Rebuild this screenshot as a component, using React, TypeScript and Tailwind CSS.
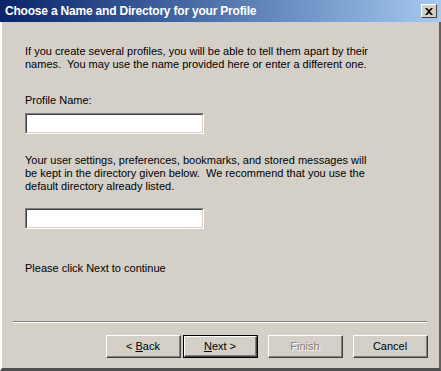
const font = { fontFamily: '"Liberation Sans", Arial, sans-serif' };

function Field() {
  return (
    <div className="w-[179px] h-[21px] border-t border-l border-[#808080] border-r border-b border-r-white border-b-white">
      <div className="w-full h-full bg-white border-t border-l border-[#404040] border-r border-b border-r-[#d4d0c8] border-b-[#d4d0c8]" />
    </div>
  );
}

function Button({ children, primary, disabled }: { children: React.ReactNode; primary?: boolean; disabled?: boolean }) {
  const inner = (
    <div className="w-full h-full border-t border-l border-white border-r border-b border-r-[#404040] border-b-[#404040]">
      <div className="w-full h-full border-r border-b border-[#808080] flex items-center justify-center">
        {disabled ? (
          <span className="text-[#808080] [text-shadow:1px_1px_0_#ffffff]">{children}</span>
        ) : (
          <span className="text-black">{children}</span>
        )}
      </div>
    </div>
  );
  if (primary) {
    return <div className="w-[75px] h-[23px] border border-black">{inner}</div>;
  }
  return <div className="w-[75px] h-[23px]">{inner}</div>;
}

export default function App() {
  return (
    <div className="w-[441px] h-[371px] flex flex-col bg-[#d4d0c8] text-[11px] leading-[13px] text-black" style={font}>
      <div className="h-[22px] flex items-center justify-between pl-[5px] pr-[4px] bg-gradient-to-r from-[#0a246a] to-[#a6caf0]">
        <span className="text-white font-bold text-[12px] tracking-[-0.2px]">
          Choose a Name and Directory for your Profile
        </span>
        <div className="w-[16px] h-[14px] bg-[#d4d0c8] border-t border-l border-white border-r border-b border-r-[#404040] border-b-[#404040] flex items-center justify-center">
          <svg width="8" height="7" viewBox="0 0 8 7">
            <path d="M0 0h2l2 2 2-2h2L5 3.5 8 7H6L4 5 2 7H0l3-3.5z" fill="#000" />
          </svg>
        </div>
      </div>
      <div className="flex-1 flex flex-col border-l-2 border-l-white border-r-2 border-r-[#606060] border-b-[3px] border-b-[#505050]">
        <div className="flex flex-col pl-[23px] pt-[23px]">
          <p>
            If you create several profiles, you will be able to tell them apart by their
            <br />
            names.&nbsp; You may use the name provided here or enter a different one.
          </p>
          <p className="mt-[23px]">Profile Name:</p>
          <div className="mt-[6px]">
            <Field />
          </div>
          <p className="mt-[20px]">
            Your user settings, preferences, bookmarks, and stored messages will
            <br />
            be kept in the directory given below.&nbsp; We recommend that you use the
            <br />
            default directory already listed.
          </p>
          <div className="mt-[15px]">
            <Field />
          </div>
          <p className="mt-[33px]">Please click Next to continue</p>
        </div>
        <div className="flex-1" />
        <div className="ml-[11px] mr-[12px] border-t border-t-[#808080] border-b border-b-white" />
        <div className="flex justify-end pr-[11px] pt-[12px] pb-[10px]">
          <Button>
            &lt; <u>B</u>ack
          </Button>
          <div className="ml-[2px]">
            <Button primary>
              <u>N</u>ext &gt;
            </Button>
          </div>
          <div className="ml-[10px]">
            <Button disabled>Finish</Button>
          </div>
          <div className="ml-[10px]">
            <Button>Cancel</Button>
          </div>
        </div>
      </div>
    </div>
  );
}
